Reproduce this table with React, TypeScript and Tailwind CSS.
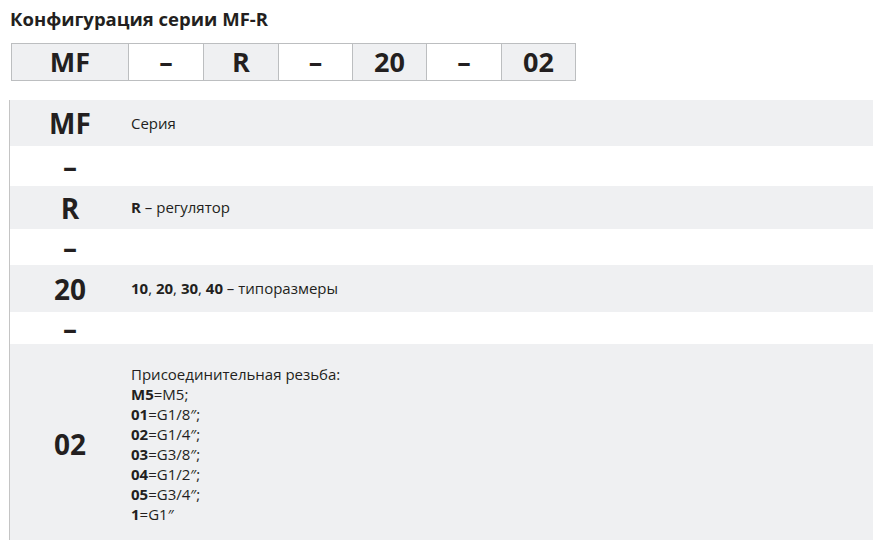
import React from 'react';

const codeCells = [
  { text: 'MF', w: 'w-[117px]', gray: true },
  { text: '–', w: 'w-[75px]', gray: false },
  { text: 'R', w: 'w-[75px]', gray: true },
  { text: '–', w: 'w-[74px]', gray: false },
  { text: '20', w: 'w-[74px]', gray: true },
  { text: '–', w: 'w-[75px]', gray: false },
  { text: '02', w: 'w-[75px]', gray: true },
];

const threads = [
  ['M5', 'M5;'],
  ['01', 'G1/8″;'],
  ['02', 'G1/4″;'],
  ['03', 'G3/8″;'],
  ['04', 'G1/2″;'],
  ['05', 'G3/4″;'],
  ['1', 'G1″'],
];

function Row({ label, h, gray, children }: { label: string; h: string; gray?: boolean; children?: React.ReactNode }) {
  return (
    <div className={`flex items-center ${h} ${gray ? 'bg-[#eff0f2]' : 'bg-white'}`}>
      <div className="w-[120px] shrink-0 text-center text-[28px] font-bold leading-none">{label}</div>
      <div className="flex-1 pl-[1px] text-[15px]">{children}</div>
    </div>
  );
}

export default function App() {
  return (
    <div className="w-[880px] h-[540px] overflow-hidden bg-white text-[#231f20] font-['Open_Sans',sans-serif]">
      <h1 className="pl-[10px] pt-[7px] text-[18.5px] font-bold leading-[24px]">Конфигурация серии MF-R</h1>

      <div className="ml-[11px] mt-[12px] flex h-[38px] w-fit border-y border-[#bcbec0]">
        {codeCells.map((c, i) => (
          <div
            key={i}
            className={`${c.w} flex items-center justify-center border-l border-[#bcbec0] last:border-r text-[27px] font-bold ${
              c.gray ? 'bg-[#eff0f2]' : 'bg-white'
            }`}
          >
            {c.text}
          </div>
        ))}
      </div>

      <div className="ml-[9px] mt-[19px] w-[864px] border-l border-[#c4c4c4]">
        <Row label="MF" h="h-[46px]" gray>
          Серия
        </Row>
        <Row label="–" h="h-[40px]" />
        <Row label="R" h="h-[43px]" gray>
          <b>R</b> – регулятор
        </Row>
        <Row label="–" h="h-[36px]" />
        <Row label="20" h="h-[47px]" gray>
          <b>10</b>, <b>20</b>, <b>30</b>, <b>40</b> – типоразмеры
        </Row>
        <Row label="–" h="h-[32px]" />
        <Row label="02" h="h-[200px]" gray>
          <div className="leading-[20px]">
            <div>Присоединительная резьба:</div>
            {threads.map(([k, v]) => (
              <div key={k}>
                <b>{k}</b>={v}
              </div>
            ))}
          </div>
        </Row>
      </div>
    </div>
  );
}
